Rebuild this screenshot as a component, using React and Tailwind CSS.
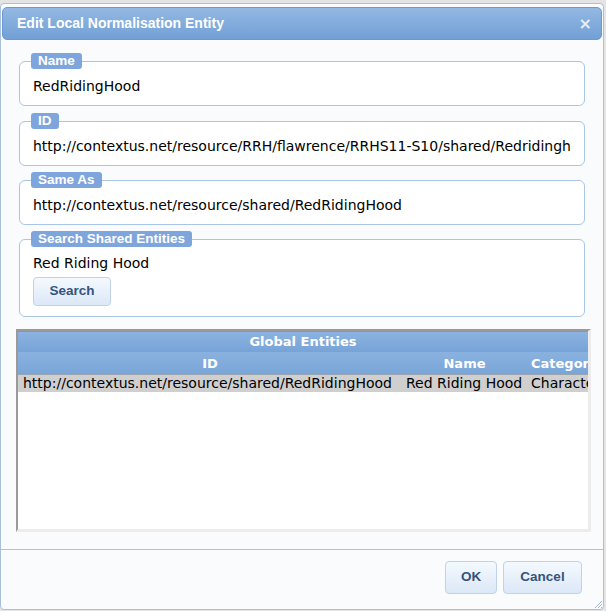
import React from 'react';

const body = { fontFamily: '"DejaVu Sans", "Liberation Sans", sans-serif' };
const label = { fontFamily: '"Liberation Sans", Arial, sans-serif' };

const Fieldset = ({ legend, children, className = '', pad = 'pt-[12px] pb-[7px]' }) => (
  <div className={`relative mx-[18px] ${className}`}>
    <div
      className="absolute left-[12px] top-0 z-10 h-[16px] rounded-[3px] bg-[#7fa6dc] px-[7px] text-[13.5px] font-bold leading-[16px] text-white"
      style={label}
    >
      {legend}
    </div>
    <div className={`mt-[8px] rounded-[6px] border border-[#a9c5e8] bg-white px-[13px] ${pad} text-[14px] text-black`}>
      {children}
    </div>
  </div>
);

const Btn = ({ children, w }) => (
  <button
    className={`rounded-[4px] border border-[#bfd2ea] bg-gradient-to-b from-[#f4f9fe] to-[#dce8f7] text-[13.5px] font-bold text-[#35547f] ${w}`}
    style={label}
  >
    {children}
  </button>
);

export default function App() {
  return (
    <div className="h-[611px] w-[606px] overflow-hidden bg-[#e4e4e4] pt-[3px]" style={body}>
      <div className="relative flex h-[607px] w-[604px] flex-col rounded-[4px] border border-[#a8c0dc] bg-[#f9fbfc]">
        {/* title bar */}
        <div className="mx-[1px] mt-[3px] flex h-[33px] items-center justify-between rounded-[5px] border border-[#6b98d0] bg-gradient-to-b from-[#93b8e3] to-[#72a0d5] pl-[14px] pr-[9px]">
          <span className="text-[14px] font-bold text-white" style={label}>Edit Local Normalisation Entity</span>
          <span className="text-[16px] font-bold leading-none text-[#e6eef8]">×</span>
        </div>

        <div className="flex flex-col">
          <Fieldset legend="Name" className="mt-[13px]">
            <div className="h-[24px] leading-[24px]">RedRidingHood</div>
          </Fieldset>
          <Fieldset legend="ID" className="mt-[7px]">
            <div className="h-[24px] overflow-hidden whitespace-nowrap leading-[24px]">
              http://contextus.net/resource/RRH/flawrence/RRHS11-S10/shared/Redridinghood
            </div>
          </Fieldset>
          <Fieldset legend="Same As" className="mt-[6px]">
            <div className="h-[24px] leading-[24px]">http://contextus.net/resource/shared/RedRidingHood</div>
          </Fieldset>
          <Fieldset legend="Search Shared Entities" className="mt-[6px]" pad="pt-[11px] pb-[10px]">
            <div className="h-[24px] leading-[24px]">Red Riding Hood</div>
            <div className="mt-[2px] flex">
              <Btn w="h-[29px] w-[78px]">Search</Btn>
            </div>
          </Fieldset>
        </div>

        {/* grid */}
        <div className="ml-[15px] mr-[12px] mt-[12px] h-[203px] overflow-hidden border-t-2 border-l-2 border-[#9a9a9a] border-r-[3px] border-b-[3px] border-r-[#ececec] border-b-[#ececec] bg-white">
          <div className="h-[21px] border-t border-[#6d9bd3] bg-gradient-to-b from-[#8cb3e1] to-[#77a3d7] text-center text-[13px] font-bold leading-[20px] text-white">
            Global Entities
          </div>
          <div className="flex h-[22px] w-[620px] bg-gradient-to-b from-[#8ab2e0] to-[#79a5d8] text-[13px] font-bold leading-[23px] text-white">
            <div className="w-[384px] text-center">ID</div>
            <div className="w-[125px] text-center">Name</div>
            <div className="flex-1 whitespace-nowrap pl-[4px]">Category</div>
          </div>
          <div className="flex h-[18px] w-[620px] border-t border-[#9aa4b0] bg-[#cfcfcf] text-[14px] leading-[17px] text-black">
            <div className="w-[384px] whitespace-nowrap pl-[5px]">http://contextus.net/resource/shared/RedRidingHood</div>
            <div className="w-[125px] whitespace-nowrap pl-[4px]">Red Riding Hood</div>
            <div className="flex-1 whitespace-nowrap pl-[4px]">Character</div>
          </div>
        </div>

        <div className="mt-[17px] border-t border-[#a9c4e0]" />

        <div className="flex justify-end gap-[6px] pr-[21px] pt-[11px]">
          <Btn w="h-[33px] w-[52px]">OK</Btn>
          <Btn w="h-[33px] w-[79px]">Cancel</Btn>
        </div>

        {/* resize grip */}
        <svg className="absolute bottom-0 right-0" width="10" height="10" viewBox="0 0 10 10">
          <path d="M9 2 L2 9 M9 5 L5 9 M9 8 L8 9" stroke="#9fb8d6" strokeWidth="1" fill="none" />
        </svg>
      </div>
    </div>
  );
}
